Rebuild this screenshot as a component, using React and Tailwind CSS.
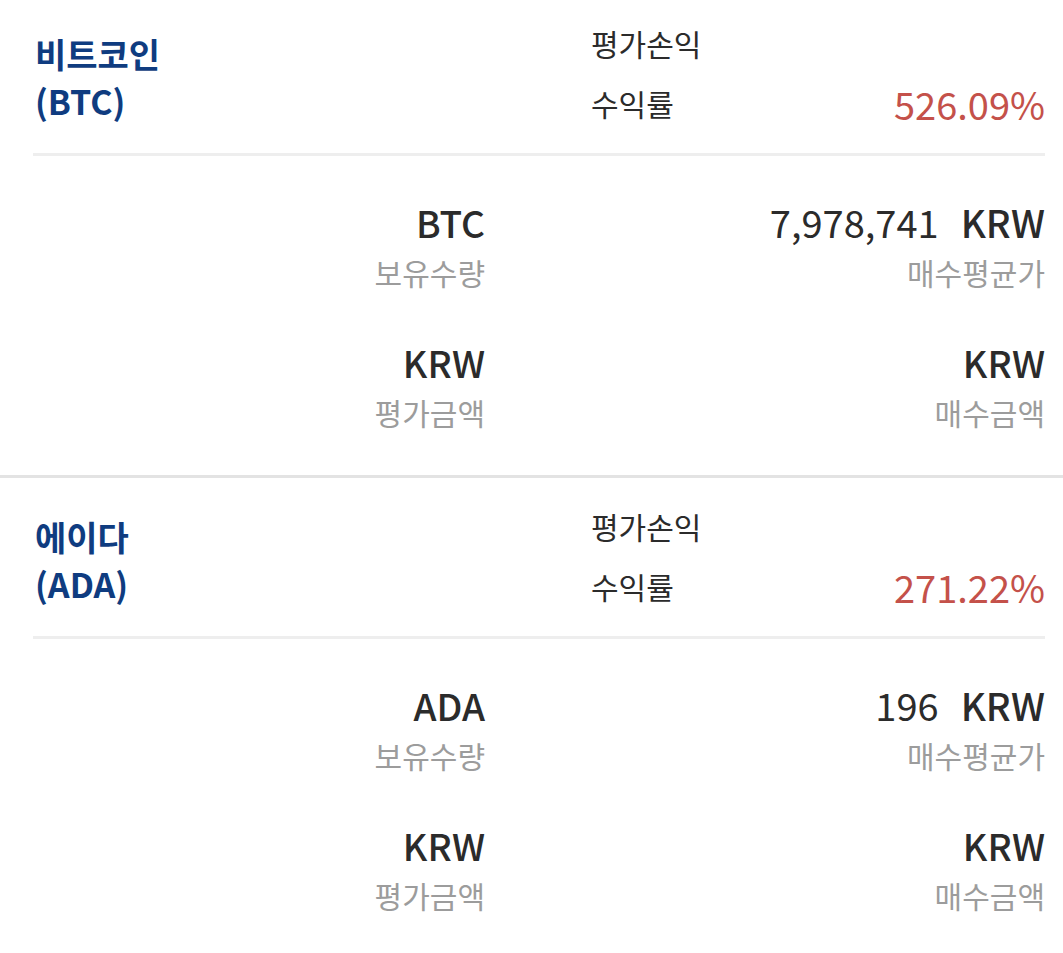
import React from "react";

const font = { fontFamily: '"Noto Sans CJK KR", "Noto Sans", sans-serif' };

function Section({ name, ticker, rate, avg }) {
  return (
    <div className="border-b-[3px] border-[#e3e3e3]">
      <div className="flex h-[158px] pl-[35px] pr-[18px]">
        <div className="w-[556px] pt-[35px] text-[34px] font-bold leading-[47px] text-[#0f3c80]">
          <div>{name}</div>
          <div>({ticker})</div>
        </div>
        <div className="flex-1 pt-[19px] text-[30px] text-[#2b2b2b]">
          <div className="flex h-[58px] items-center">평가손익</div>
          <div className="flex h-[62px] items-center justify-between">
            <span>수익률</span>
            <span className="text-[38px] text-[#c4514a]">{rate}</span>
          </div>
        </div>
      </div>
      <div className="ml-[33px] mr-[18px] h-[3px] bg-[#eeeeee]" />
      <div className="flex pt-[41px] pb-[38px] pr-[18px]">
        <div className="w-[485px] text-right">
          <div className="text-[37px] font-medium leading-[50px] text-[#2b2b2b]">{ticker}</div>
          <div className="text-[30px] leading-[50px] text-[#9c9c9c]">보유수량</div>
          <div className="mt-[40px] text-[37px] font-medium leading-[50px] text-[#2b2b2b]">KRW</div>
          <div className="text-[30px] leading-[50px] text-[#9c9c9c]">평가금액</div>
        </div>
        <div className="flex-1 text-right">
          <div className="text-[38px] leading-[50px] text-[#2b2b2b]">
            <span>{avg}</span>
            <span className="ml-[22px] font-medium">KRW</span>
          </div>
          <div className="text-[30px] leading-[50px] text-[#9c9c9c]">매수평균가</div>
          <div className="mt-[40px] text-[37px] font-medium leading-[50px] text-[#2b2b2b]">KRW</div>
          <div className="text-[30px] leading-[50px] text-[#9c9c9c]">매수금액</div>
        </div>
      </div>
    </div>
  );
}

export default function App() {
  return (
    <div className="h-[953px] w-[1063px] overflow-hidden bg-white" style={font}>
      <div className="-mt-[5px]">
        <Section name="비트코인" ticker="BTC" rate="526.09%" avg="7,978,741" />
        <Section name="에이다" ticker="ADA" rate="271.22%" avg="196" />
      </div>
    </div>
  );
}
